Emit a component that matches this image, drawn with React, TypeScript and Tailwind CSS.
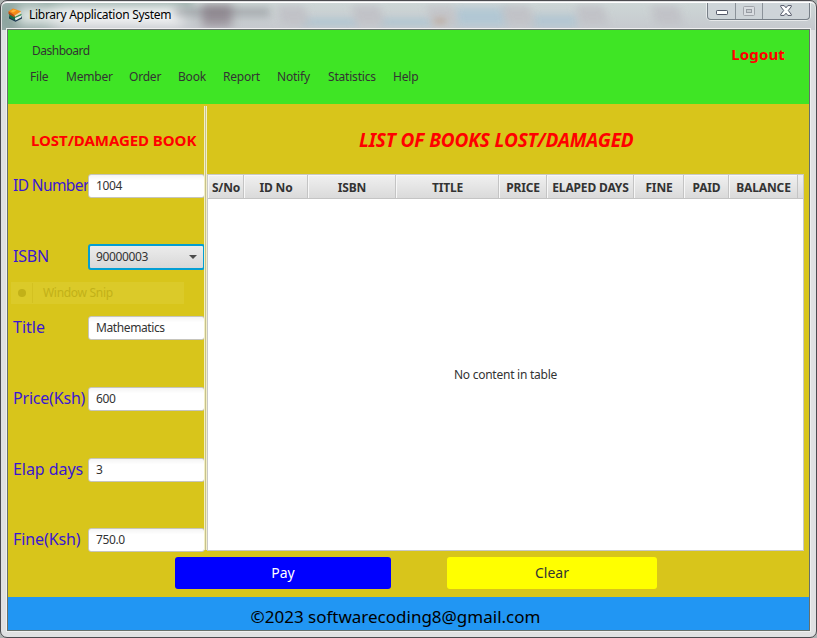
import React from "react";

type Field = { label: string; value: string; gap: string; tracking: string; combo?: boolean };

const menus = [
  { name: "File", width: "w-[36px]" },
  { name: "Member", width: "w-[63px]" },
  { name: "Order", width: "w-[49px]" },
  { name: "Book", width: "w-[45px]" },
  { name: "Report", width: "w-[54px]" },
  { name: "Notify", width: "w-[51px]" },
  { name: "Statistics", width: "w-[65px]" },
  { name: "Help", width: "w-[40px]" },
];

const fields: Field[] = [
  { label: "ID Number", value: "1004", gap: "mt-[18px]", tracking: "text-[15.5px] tracking-[-0.6px]" },
  { label: "ISBN", value: "90000003", gap: "mt-[46px]", tracking: "text-[16px] tracking-[-0.2px]", combo: true },
  { label: "Title", value: "Mathematics", gap: "mt-[46px]", tracking: "text-[16px] tracking-[0px]" },
  { label: "Price(Ksh)", value: "600", gap: "mt-[46px]", tracking: "text-[16px] tracking-[-0.2px]" },
  { label: "Elap days", value: "3", gap: "mt-[46px]", tracking: "text-[16px] tracking-[-0.05px]" },
  { label: "Fine(Ksh)", value: "750.0", gap: "mt-[45px]", tracking: "text-[16px] tracking-[-0.1px]" },
];

const columns = [
  { name: "S/No", width: "w-[36px]" },
  { name: "ID No", width: "w-[64px]" },
  { name: "ISBN", width: "w-[88px]" },
  { name: "TITLE", width: "w-[103px]" },
  { name: "PRICE", width: "w-[48px]" },
  { name: "ELAPED DAYS", width: "w-[87px]" },
  { name: "FINE", width: "w-[50px]" },
  { name: "PAID", width: "w-[45px]" },
  { name: "BALANCE", width: "w-[69px]" },
];

function BooksIcon() {
  return (
    <svg width="15" height="14" viewBox="0 0 15 14" className="shrink-0">
      <path d="M1 8 7 11.500 14 8v2.500L7.500 13.700 1 10.500Z" fill="#1c3550" />
      <path d="M1 5.500 7 8.500v4L1.500 9.500Z" fill="#176c48" />
      <path d="M7 9.500 13.500 7v2.200L7.500 12.500Z" fill="#e7eef0" />
      <path d="M7 8.500 13.500 5.800v1.400L7 10Z" fill="#3a8f58" />
      <path d="M6.500 7.500 13 3.800v1.800L7 8.700Z" fill="#f4d9ae" />
      <path d="M.5 3.300 5 .5l8.200 2.800L6.500 7.500Z" fill="#f58a16" />
      <path d="M.5 3.300 6.500 7.300v2.200L.5 5.800Z" fill="#c04d0f" />
      <path d="M2.800 3.300 5.500 1.600l3 1-3.500 2Z" fill="#ffb240" />
    </svg>
  );
}

function TitleBar() {
  return (
    <div className="relative flex h-[27px] items-start overflow-hidden bg-gradient-to-b from-[#cdd6d6] to-[#c6c9ce]">
      <div className="absolute -left-3 -top-2 h-11 w-16 bg-[#62877c]/60 blur-[9px]" />
      <div className="absolute left-[40px] -top-2 h-[12px] w-[150px] bg-[#62877c]/50 blur-[5px]" />
      <div className="absolute left-[16px] top-[4px] h-[18px] w-[165px] bg-white/75 blur-[6px]" />
      <div className="absolute left-[172px] top-[5px] h-[8px] w-[96px] bg-[#777a80]/50 blur-[4px]" />
      <div className="absolute left-[200px] top-[1px] h-[23px] w-[30px] bg-[#71606c]/50 blur-[5px]" />
      <div className="absolute left-[300px] top-[15px] h-[8px] w-[56px] bg-[#a9c4d3]/70 blur-[3px]" />
      <div className="absolute left-[378px] top-[15px] h-[8px] w-[52px] bg-[#a9c4d3]/70 blur-[3px]" />
      <div className="absolute left-[452px] top-[5px] h-[18px] w-[54px] bg-[#b1c7d4] blur-[4px]" />
      <div className="absolute left-[530px] top-[12px] h-[12px] w-[46px] bg-[#b1c6d2] blur-[4px]" />
      <div className="absolute left-[277px] top-[3px] h-[19px] w-[28px] skew-x-12 bg-[#c1c2c7] blur-[4px]" />
      <div className="absolute left-[352px] top-[3px] h-[19px] w-[28px] skew-x-12 bg-[#c1c2c7] blur-[4px]" />
      <div className="absolute left-[427px] top-[3px] h-[19px] w-[27px] skew-x-12 bg-[#c4c5c9] blur-[4px]" />
      <div className="absolute left-[432px] top-[15px] h-[6px] w-[12px] bg-[#bba595]/70 blur-[3px]" />
      <div className="absolute left-[502px] top-[3px] h-[19px] w-[28px] skew-x-12 bg-[#c1c2c7] blur-[4px]" />
      <div className="absolute left-[576px] top-[3px] h-[19px] w-[28px] skew-x-12 bg-[#c1c2c7] blur-[4px]" />
      <div className="absolute left-[651px] top-[3px] h-[19px] w-[28px] skew-x-12 bg-[#c1c2c7] blur-[4px]" />
      <div className="relative flex w-full items-start pl-[6px]">
        <div className="mt-[5px]"><BooksIcon /></div>
        <span className="ml-[6px] mt-[3px] whitespace-nowrap text-[12px] leading-[18px] tracking-[-0.28px] text-black">
          Library Application System
        </span>
        <div className="-mt-px ml-auto mr-[5px] flex h-[18px] w-[103px] rounded-b-[4px] border border-t-0 border-[#777f87] bg-[#ced4da]/80 shadow-[0_0_0_1px_rgba(255,255,255,0.55)]">
          <div className="flex w-[28px] items-center justify-center border-r border-[#8b9299]">
            <svg width="12" height="6" className="mt-[4px]"><rect x=".5" y=".5" width="11" height="4" rx=".7" fill="#fff" stroke="#535868" /></svg>
          </div>
          <div className="flex w-[27px] items-center justify-center border-r border-[#8b9299]">
            <svg width="12" height="10"><rect x=".5" y=".5" width="11" height="9" rx="1" fill="#d9dde1" stroke="#a1a5ab" /><rect x="3.500" y="3.500" width="5" height="3" fill="#c6cace" stroke="#979ca3" /></svg>
          </div>
          <div className="flex flex-1 items-center justify-center">
            <svg width="12" height="11" viewBox="0 0 12 11"><path d="M.7.6h3.500L6 2.800 7.800.6h3.500v1L8.300 5.500l3 3.900v1H7.800L6 8.200l-1.800 2.200H.7v-1l3-3.900-3-3.900Z" fill="#fff" stroke="#535868" /></svg>
          </div>
        </div>
      </div>
    </div>
  );
}

function FieldRow({ label, value, gap, tracking, combo }: Field) {
  return (
    <div className={`${gap} flex h-[25px] items-start pl-[5px]`}>
      <label className={`-mt-px w-[75px] shrink-0 whitespace-nowrap leading-[24px] text-[#3a17d2] ${tracking}`}>{label}</label>
      {combo ? (
        <div className="-mt-px flex h-[26px] w-[117px] shrink-0 items-center rounded-[3px] border-2 border-[#039ed3] bg-gradient-to-b from-[#ececec] to-[#d8d8d8] px-[6px]">
          <span className="text-[12px] leading-[18px] tracking-[-0.35px] text-[#333]">{value}</span>
          <svg className="ml-auto" width="8" height="4"><path d="M0 0h8L4 4Z" fill="#4b4b4b" /></svg>
        </div>
      ) : (
        <div className="flex h-[24px] w-[117px] shrink-0 items-center rounded-[3px] border border-[#c6c5bd] bg-gradient-to-b from-[#f4f4f4] via-white via-25% to-white pl-[7px]">
          <span className="text-[12px] leading-[18px] tracking-[-0.4px] text-[#333]">{value}</span>
        </div>
      )}
    </div>
  );
}

export default function App() {
  return (
    <div className="h-[638px] w-[817px] overflow-hidden bg-[#aeb3b2] font-['Noto_Sans','Open_Sans',sans-serif]">
      <div className="flex h-[638px] w-[817px] flex-col rounded-[7px] border border-[#4b4b4f] bg-[#e0e1e2]">
        <div className="mx-px mt-px overflow-hidden rounded-t-[5px] border-t border-white">
          <TitleBar />
        </div>
        <div className="relative -mt-[2px] ml-[5px] w-[805px] border border-[#eff0f0]">
          <div className="h-[602px] w-[803px] border border-[#66706b] bg-[#d8c51b]">
            <header className="flex h-[74px] justify-between bg-[#3fe525] text-[#333]">
              <div className="pl-[22px] pt-[12px] text-[12px] leading-[18px]">
                <div className="pl-[2px] tracking-[-0.5px]">Dashboard</div>
                <nav className="mt-[8px] flex tracking-[-0.2px]">
                  {menus.map((m) => <span key={m.name} className={m.width}>{m.name}</span>)}
                </nav>
              </div>
              <div className="pr-[24px] pt-[13px] text-[15px] font-bold leading-[22px] tracking-[0.15px] text-[#ff0000]">Logout</div>
            </header>

            <div className="flex h-[448px]">
              <aside className="w-[196px]">
                <h2 className="mt-[25px] h-[27px] whitespace-nowrap pl-[23px] text-[15px] font-bold leading-[22px] tracking-[-0.05px] text-[#ff0000]">LOST/DAMAGED BOOK</h2>
                {fields.map((f) => (
                  <div key={f.label} className="relative">
                    <FieldRow {...f} />
                    {f.combo && (
                      <div className="absolute left-[3px] top-[37px] flex h-[22px] w-[173px] items-center bg-[#dbca29] text-[12px] text-[#c2b118]">
                        <span className="ml-[7px] h-[8px] w-[8px] rounded-full bg-[#c2b118]" />
                        <span className="ml-[6px] h-[20px] w-px bg-[#d3c121]" />
                        <span className="ml-[10px] tracking-[-0.3px]">Window Snip</span>
                      </div>
                    )}
                  </div>
                ))}
              </aside>
              <div className="relative mt-[2px] h-[444px] w-[3px] shrink-0 border-x border-[#f3efc5] bg-[#c6c18d]" />
              <main className="w-[597px]">
                <h1 className="mt-[22px] whitespace-nowrap pl-[152px] text-[19px] font-bold italic leading-[28px] tracking-[-0.13px] text-[#ff0000]">LIST OF BOOKS LOST/DAMAGED</h1>
                <section className="mt-[20px] flex h-[377px] w-[597px] flex-col border border-[#c8c8c8] bg-white">
                  <div className="flex h-[24px] border-b border-[#c4c4c4] bg-gradient-to-b from-[#f0f0f0] to-[#dadada] text-[12px] font-bold leading-[25px] text-[#333]">
                    {columns.map((c) => (
                      <div key={c.name} className={`${c.width} flex shrink-0 justify-center whitespace-nowrap border-r border-[#c4c4c4] pl-px tracking-[-0.15px] shadow-[inset_1px_1px_0_#f7f7f7]`}>{c.name}</div>
                    ))}
                  </div>
                  <div className="flex flex-1 items-center justify-center text-[12px] tracking-[-0.25px] text-[#333]">No content in table</div>
                </section>
              </main>
            </div>

            <div className="flex h-[45px] pl-[167px] pt-[5px] text-[14px]">
              <button className="h-[32px] w-[216px] rounded-[3px] bg-[#0000ff] pb-[2px] text-white">Pay</button>
              <button className="ml-[56px] h-[32px] w-[210px] rounded-[3px] bg-[#ffff00] pb-[2px] text-[#333]">Clear</button>
            </div>

            <footer className="flex h-[33px] items-center justify-center bg-[#2196f3] pr-[26px] pt-[6px] text-[17px] leading-[26px] text-black">
              ©2023 softwarecoding8@gmail.com
            </footer>
          </div>
        </div>
      </div>
    </div>
  );
}
